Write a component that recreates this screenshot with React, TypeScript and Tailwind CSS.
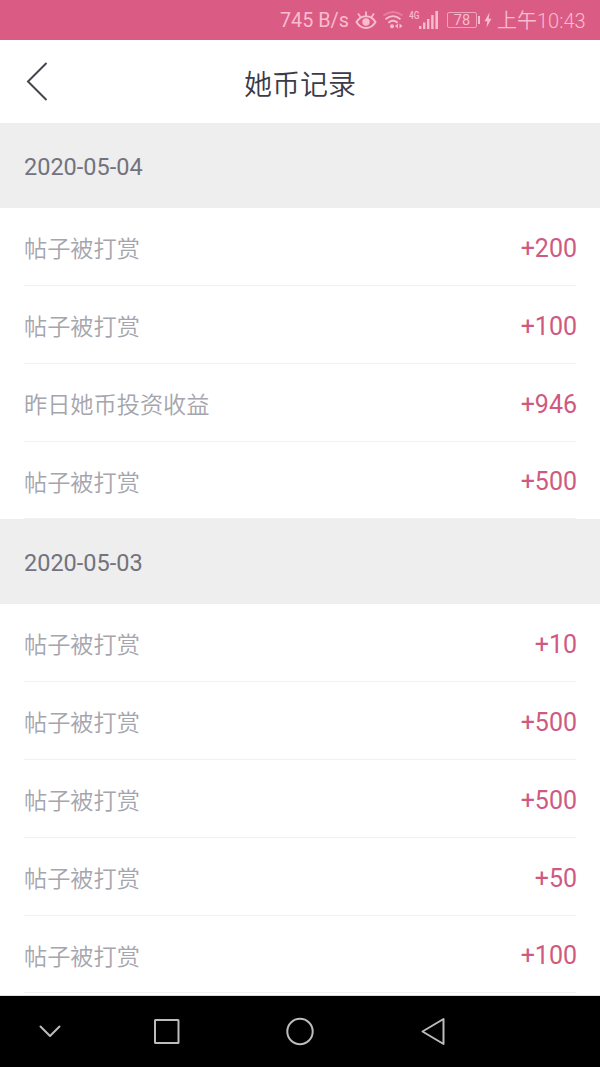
import React from 'react';

interface CoinRecord {
  title: string;
  amount: number;
}

interface RecordGroup {
  date: string;
  records: CoinRecord[];
}

const groups: RecordGroup[] = [
  {
    date: '2020-05-04',
    records: [
      { title: '帖子被打赏', amount: 200 },
      { title: '帖子被打赏', amount: 100 },
      { title: '昨日她币投资收益', amount: 946 },
      { title: '帖子被打赏', amount: 500 }
    ]
  },
  {
    date: '2020-05-03',
    records: [
      { title: '帖子被打赏', amount: 10 },
      { title: '帖子被打赏', amount: 500 },
      { title: '帖子被打赏', amount: 500 },
      { title: '帖子被打赏', amount: 50 },
      { title: '帖子被打赏', amount: 100 }
    ]
  }
];

const StatusBar: React.FC = () => (
  <div className="h-10 shrink-0 flex items-center bg-[#da5b83] text-[#f9bccf] pl-[280px]">
    <span className="w-[70px] text-[19.8px] leading-10 whitespace-nowrap pt-0.5">745 B/s</span>

    {/* Eye comfort */}
    <svg className="ml-[5px] w-[22px] h-10 shrink-0" viewBox="0 0 22 40" fill="none" stroke="currentColor">
      <path d="M1.5 22C4 18 7.5 16.2 11 16.2S18 18 20.5 22C18 26.3 14.5 28 11 28S4 26.3 1.5 22Z" strokeWidth="2" />
      <circle cx="11" cy="22" r="3.7" fill="currentColor" stroke="none" />
      <path d="M11 16V11.5M5.5 17L3 13.5M16.5 17L19 13.5" strokeWidth="1.8" />
    </svg>

    {/* Wifi */}
    <svg className="ml-[5px] w-[22px] h-10 shrink-0" viewBox="0 0 22 40" fill="none" stroke="currentColor" strokeWidth="1.8">
      <path d="M1.5 15.5Q11 8.5 20.5 15.5" opacity="0.4" />
      <path d="M3.5 19.2Q11 13 18.5 19.2" />
      <path d="M6.3 22.8Q11 18.8 15.7 22.8" />
      <circle cx="10" cy="26.3" r="2" fill="currentColor" stroke="none" />
      <path d="M16 23.5V28.5L13 26ZM17.5 23.5V28.5L20.5 26Z" fill="currentColor" stroke="none" />
    </svg>

    {/* Mobile signal */}
    <span className="ml-[5px] w-[10px] h-10 pt-[9px] text-[11.5px] leading-[13px] font-medium origin-left scale-x-[.72]">4G</span>
    <svg className="w-5 h-10 shrink-0" viewBox="0 0 20 40" fill="currentColor">
      <rect x="0" y="26" width="2.4" height="3" />
      <rect x="4" y="22.5" width="2.4" height="6.5" />
      <rect x="8" y="19" width="2.4" height="10" />
      <rect x="12.2" y="15" width="2.4" height="14" />
      <rect x="16.4" y="11" width="2.6" height="18" />
    </svg>

    {/* Battery */}
    <div className="ml-[8px] w-[30px] h-[16px] shrink-0 rounded-[2px] border border-[#f0a3b9] text-center text-[14.5px] leading-[15px]">78</div>
    <div className="ml-px w-[2px] h-2 shrink-0 bg-current" />
    <svg className="ml-[4px] w-[8px] h-10 shrink-0" viewBox="0 0 8 40" fill="currentColor">
      <path d="M5.5 12.5L0.5 21.2H3.3L2.5 27.5L7.5 18.8H4.7Z" />
    </svg>
    <span className="ml-[5px] text-[20px] leading-10 font-[350] whitespace-nowrap pt-0.5">上午10:43</span>
  </div>
);

const TitleBar: React.FC = () => (
  <header className="relative h-[83.3px] shrink-0 flex items-center justify-center bg-white">
    <button className="absolute left-6 top-[21px]" aria-label="返回">
      <svg className="w-6 h-10" viewBox="0 0 24 40" fill="none" stroke="#45454d" strokeWidth="2">
        <path d="M22.5 2L4 20.5L22.5 39" />
      </svg>
    </button>
    <h1 className="pt-2 text-[28px] leading-10 font-[350] text-[#3b3b49]">她币记录</h1>
  </header>
);

const RecordRow: React.FC<{ record: CoinRecord }> = ({ record }) => (
  <li className="h-[77.8px] flex items-center justify-between border-b border-[#f1f1f1]">
    <span className="pt-1.5 text-[23.2px] font-[350] text-[#a5a5ad]">{record.title}</span>
    <span className="-mr-px pt-1 text-[25px] text-[#cf5a80]">+{record.amount}</span>
  </li>
);

const NavBar: React.FC = () => (
  <nav className="h-[71px] shrink-0 bg-black flex items-center">
    <svg className="w-[600px] h-[71px]" viewBox="0 0 600 71" fill="none" stroke="#bcbcbc" strokeWidth="2" strokeLinecap="round" strokeLinejoin="round">
      <path d="M40.5 30.5L50 40L59.5 30.5" />
      <rect x="155" y="24" width="23.5" height="23" rx="0.5" />
      <circle cx="300" cy="35.5" r="12.7" />
      <path d="M422.5 35.5L443.5 23V48Z" />
    </svg>
  </nav>
);

const App: React.FC = () => {
  return (
    <div className="w-[600px] h-[1067px] overflow-hidden flex flex-col bg-white font-[Roboto,'Noto_Sans_CJK_SC',sans-serif]">
      <StatusBar />
      <TitleBar />
      <main className="flex-1 min-h-0 overflow-hidden border-b border-[#e0e0e0]">
        {groups.map((group) => (
          <section key={group.date}>
            <h2 className="h-[85px] flex items-center px-6 pt-[3px] bg-[#eeeeee] text-[23.5px] text-[#73737d]">{group.date}</h2>
            <ul className="px-6">
              {group.records.map((record, i) => (
                <RecordRow key={i} record={record} />
              ))}
            </ul>
          </section>
        ))}
      </main>
      <NavBar />
    </div>
  );
};

export default App;
